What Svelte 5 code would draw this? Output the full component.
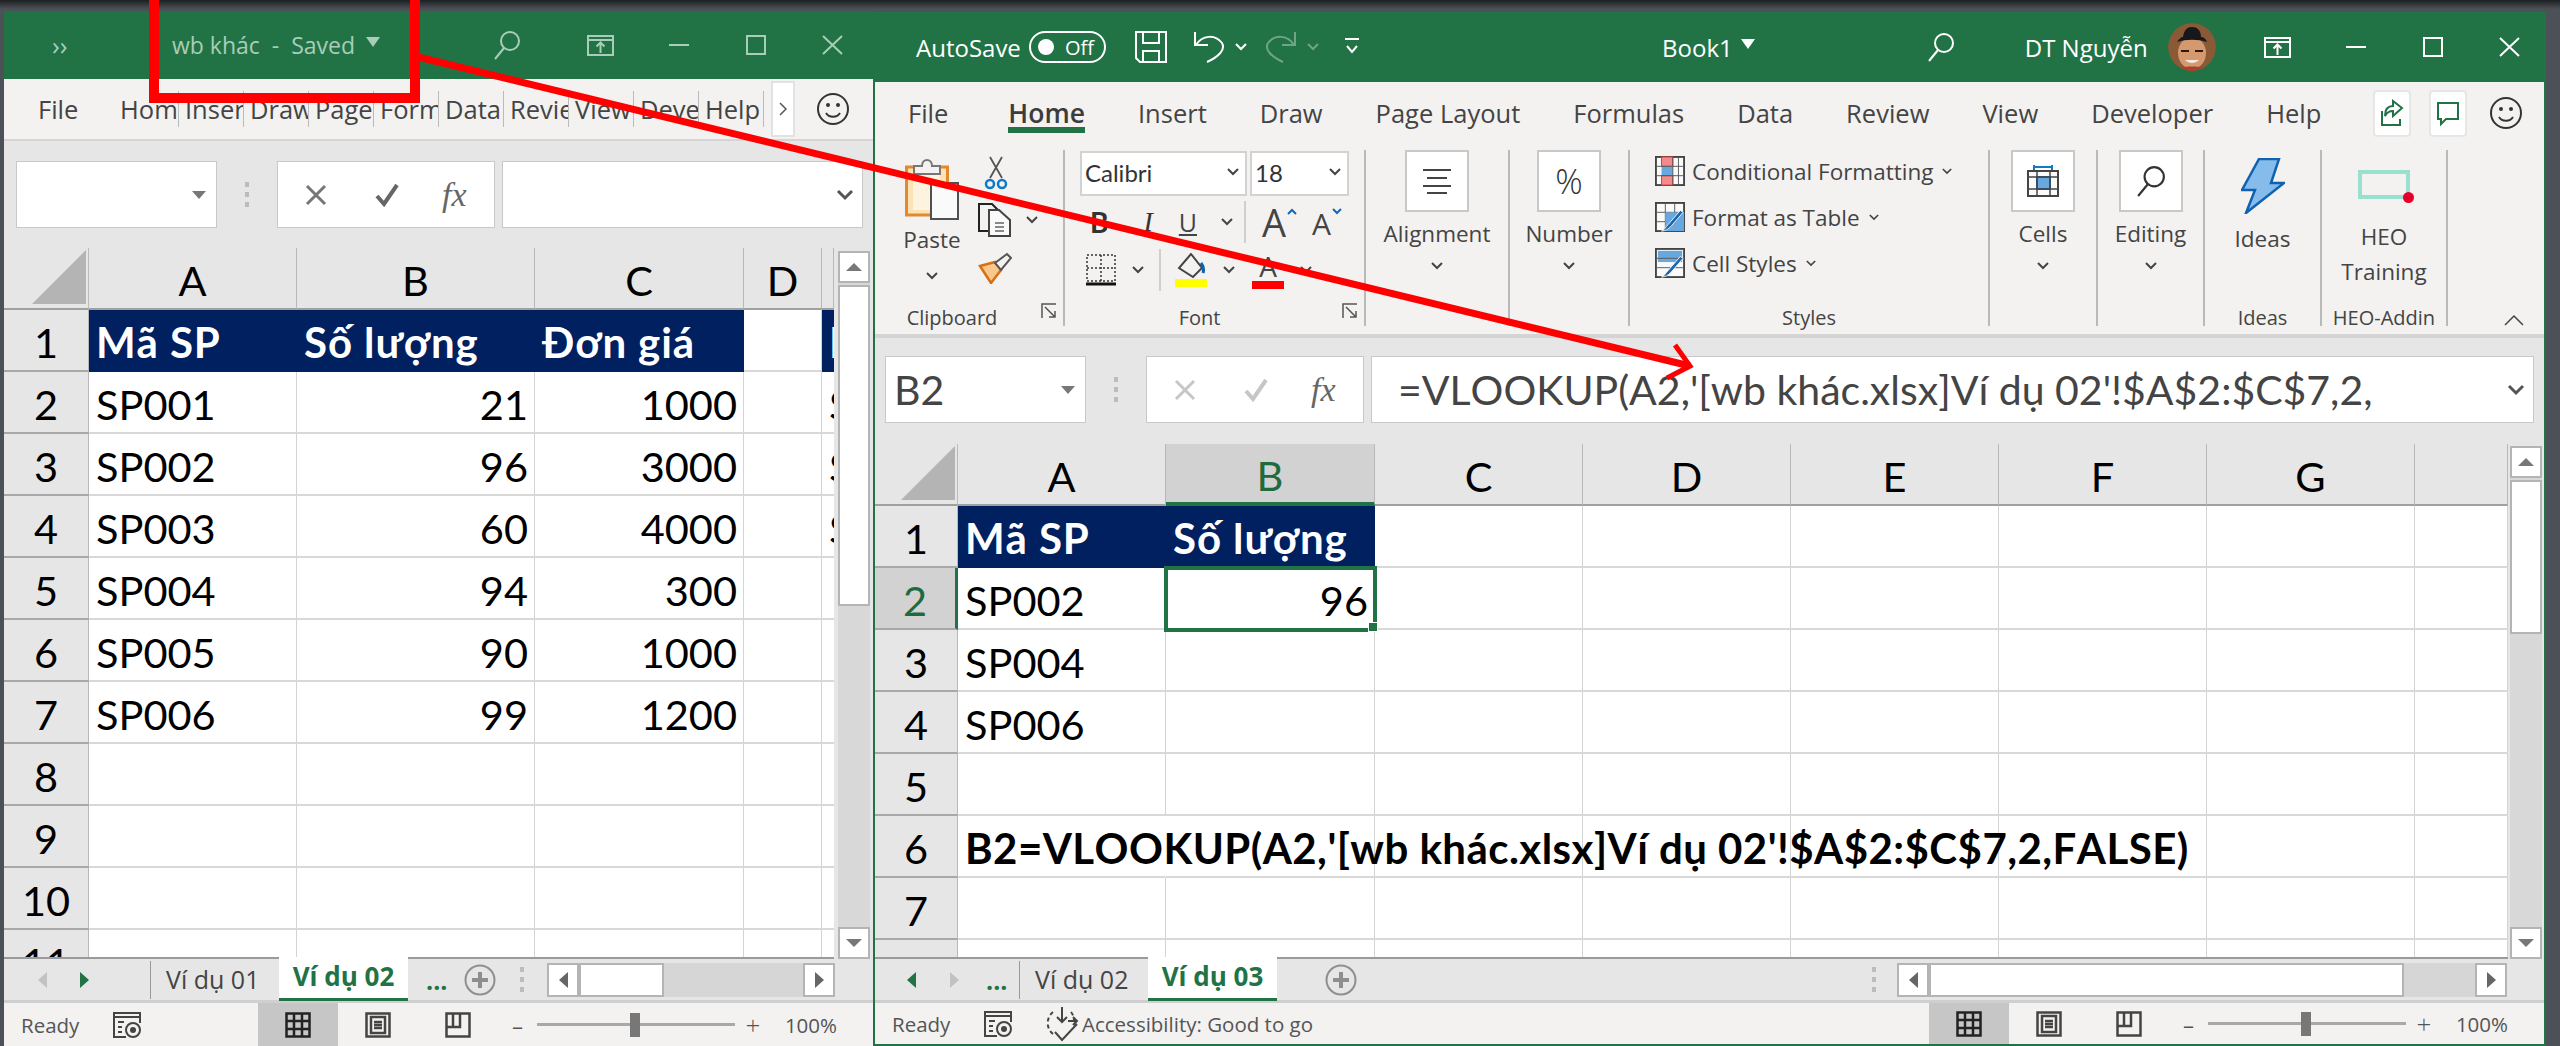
<script>
  const leftTabs = ['Home', 'Insert', 'Draw', 'Page Layout', 'Formulas', 'Data', 'Review', 'View', 'Developer', 'Help'];
  const rightTabs = ['Insert', 'Draw', 'Page Layout', 'Formulas', 'Data', 'Review', 'View', 'Developer', 'Help'];

  const leftRows = [
    ['Mã SP', 'Số lượng', 'Đơn giá', '', 'Mã SP'],
    ['SP001', '21', '1000', '', 'SP002'],
    ['SP002', '96', '3000', '', 'SP004'],
    ['SP003', '60', '4000', '', 'SP006'],
    ['SP004', '94', '300', '', ''],
    ['SP005', '90', '1000', '', ''],
    ['SP006', '99', '1200', '', ''],
    ['', '', '', '', ''],
    ['', '', '', '', ''],
    ['', '', '', '', ''],
    ['', '', '', '', '']
  ];
  const rightRows = [
    ['Mã SP', 'Số lượng'],
    ['SP002', '96'],
    ['SP004', ''],
    ['SP006', ''],
    ['', ''],
    ['B2=VLOOKUP(A2,\'[wb khác.xlsx]Ví dụ 02\'!$A$2:$C$7,2,FALSE)', ''],
    ['', ''],
    ['', '']
  ];
  const isNum = (v) => /^\d+$/.test(v);
</script>

{#snippet chev()}
  <svg class="chev" viewBox="0 0 12 8"><path d="M1 1l5 5 5-5" /></svg>
{/snippet}

{#snippet search()}
  <svg class="ic-search" viewBox="0 0 28 30"><circle cx="17" cy="11" r="9" /><path d="M11 18L2 29" /></svg>
{/snippet}

{#snippet winButtons()}
  <svg class="ic-display" viewBox="0 0 27 21"><rect x="1" y="1" width="25" height="19" /><path d="M1 5h25M13.500 18V8M9.500 11.500l4-4 4 4" /></svg>
  <span class="ic-min"></span>
  <span class="ic-max"></span>
  <svg class="ic-close" viewBox="0 0 21 20"><path d="M1 1l19 18M20 1L1 19" /></svg>
{/snippet}

{#snippet smiley()}
  <svg class="ic-smile" viewBox="0 0 32 32"><circle cx="16" cy="16" r="15" /><circle cx="11" cy="12" r="2" class="dot" /><circle cx="21" cy="12" r="2" class="dot" /><path d="M9 20c3 5 11 5 14 0" /></svg>
{/snippet}

{#snippet fxBoxes(dim)}
  <span class="dots"><i></i><i></i><i></i></span>
  <div class="fxbox" class:dim>
    <svg class="ic-x" viewBox="0 0 24 24"><path d="M3 3l18 18M21 3L3 21" /></svg>
    <svg class="ic-check" viewBox="0 0 26 24"><path d="M3 13l7 8L23 2" /></svg>
    <span class="fx">fx</span>
  </div>
{/snippet}

{#snippet sheetGrid(cols, letters, rows, rowClass, active)}
  <div class="grid {rowClass}">
    <div class="corner"><svg viewBox="0 0 56 56"><path d="M56 0v56H0z" /></svg></div>
    {#each letters as l, i}
      <div class="colhead" class:on={active && l === 'B'}>{l}</div>
    {/each}
    {#each rows as row, r}
      <div class="rowhead" class:on={active && r === 1}>{r + 1}</div>
      {#each cols as _, c}
        {@const v = row[c] ?? ''}
        <div
          class="cell"
          class:num={isNum(v)}
          class:head={r === 0 && v !== ''}
          class:long={v.length > 20}
          class:sel={active && r === 1 && c === 1}
        >{v}{#if active && r === 1 && c === 1}<span class="handle"></span>{/if}</div>
      {/each}
    {/each}
  </div>
{/snippet}

{#snippet statusIcons()}
  <div class="viewbtns">
    <span class="viewbtn on">
      <svg viewBox="0 0 26 26"><rect x="1.500" y="1.500" width="23" height="23" /><path d="M9 1v24M17 1v24M1 9h24M1 17h24" /></svg>
    </span>
    <span class="viewbtn">
      <svg viewBox="0 0 26 26"><rect x="1.500" y="1.500" width="23" height="23" /><rect x="6" y="5" width="14" height="16" /><path d="M9 10h8M9 13h8M9 16h8" /></svg>
    </span>
    <span class="viewbtn">
      <svg viewBox="0 0 26 26"><rect x="1.500" y="1.500" width="23" height="23" /><path d="M1.500 15H15V1.500M8 1.500V15" /></svg>
    </span>
  </div>
  <div class="zoom">
    <span class="zm">–</span>
    <span class="ztrack"><span class="zthumb"></span></span>
    <span class="zp">+</span>
    <span class="zpct">100%</span>
  </div>
{/snippet}

{#snippet macro()}
  <svg class="ic-macro" viewBox="0 0 28 26"><path d="M1 5V1h26v4M1 5h26M1 5v20h12M5 10h6M5 15h4M5 20h4M27 5v6" /><circle cx="20" cy="18" r="7" /><circle cx="20" cy="18" r="3" class="dot" /></svg>
{/snippet}

{#snippet launcher()}
  <svg class="ic-launch" viewBox="0 0 16 16"><path d="M1 15V1h14M4 4l10 10M14 8v6H8" /></svg>
{/snippet}

<div class="desktop">
  <!-- left window -->
  <section class="win left">
    <header class="title">
      <span class="more">››</span>
      <span class="wbname">wb khác&nbsp; -&nbsp; Saved</span>
      <span class="caret"></span>
      <span class="search-slot">{@render search()}</span>
      <span class="btns">{@render winButtons()}</span>
    </header>
    <nav class="tabs">
      <span class="tfile">File</span>
      {#each leftTabs as t}
        <span class="tcut">{t}</span>
      {/each}
      <span class="tmore"><svg viewBox="0 0 8 14"><path d="M1 1l6 6-6 6" /></svg></span>
      {@render smiley()}
    </nav>
    <div class="formula">
      <div class="namebox"><span></span><span class="tri"></span></div>
      {@render fxBoxes(false)}
      <div class="fbox"><span class="ftext"></span><svg class="fchev" viewBox="0 0 18 12"><path d="M2 2l7 7 7-7" /></svg></div>
    </div>
    <div class="sheet">
      {@render sheetGrid(['A', 'B', 'C', 'D', 'E'], ['A', 'B', 'C', 'D', ''], leftRows, 'gleft', false)}
      <div class="vscroll">
        <span class="sbtn"><i class="up"></i></span>
        <span class="vthumb"></span>
        <span class="strack"></span>
        <span class="sbtn"><i class="down"></i></span>
      </div>
    </div>
    <div class="sheetbar">
      <span class="arrows"><i class="al off"></i><i class="ar"></i></span>
      <span class="sname">Ví dụ 01</span>
      <span class="sactive">Ví dụ 02</span>
      <span class="ell">...</span>
      <span class="plus"><svg viewBox="0 0 32 32"><circle cx="16" cy="16" r="14.500" /><path d="M16 8v16M8 16h16" /></svg></span>
      <span class="dots small"><i></i><i></i><i></i></span>
      <div class="hscroll">
        <span class="hbtn"><i class="al dark"></i></span>
        <span class="hthumb"></span>
        <span class="htrack"></span>
        <span class="hbtn"><i class="ar dark"></i></span>
      </div>
    </div>
    <footer class="status">
      <span class="ready">Ready</span>
      {@render macro()}
      <span class="grow"></span>
      {@render statusIcons()}
    </footer>
  </section>

  <!-- right window -->
  <section class="win right">
    <header class="title">
      <span class="autosave">AutoSave</span>
      <span class="toggle"><i></i>Off</span>
      <svg class="ic-save" viewBox="0 0 32 32"><path d="M1 1h30v30H5l-4-4z" /><path d="M8 1v11h16V1M8 31V20h16v11" /></svg>
      <svg class="ic-undo" viewBox="0 0 32 32"><path d="M2 1v13h13M3 14C9 4 22 3 29 12c4 7-4 14-15 19" /></svg>
      <span class="qchev">{@render chev()}</span>
      <svg class="ic-redo" viewBox="0 0 32 32"><path d="M30 1v13H17M29 14C23 4 10 3 3 12c-4 7 4 14 15 19" /></svg>
      <span class="qchev dim">{@render chev()}</span>
      <svg class="ic-custom" viewBox="0 0 14 18"><path d="M0 1h14M2 8l5 6 5-6" /></svg>
      <span class="book">Book1</span>
      <span class="caret white"></span>
      <span class="search-slot r">{@render search()}</span>
      <span class="user">DT Nguyễn</span>
      <svg class="avatar" viewBox="0 0 48 48">
        <circle cx="24" cy="24" r="24" fill="#8a5a36" />
        <ellipse cx="24" cy="30" rx="14" ry="16" fill="#d4996f" />
        <path d="M9 19c2-3 4-5 6-5 1-7 4-10 9-10s9 3 9 10c3 0 5 2 6 5-9-3-21-3-30 0z" fill="#17171c" />
        <path d="M13 28h8M27 28h8" stroke="#2a1a12" stroke-width="2" />
        <path d="M17 37c4 4 10 4 14 0z" fill="#f3e9e3" />
        <path d="M8 48c2-6 30-6 32 0z" fill="#a7432e" />
      </svg>
      <span class="btns r">{@render winButtons()}</span>
    </header>
    <nav class="tabs main">
      <span class="mtab">File</span>
      <span class="mtab active">Home</span>
      {#each rightTabs as t}
        <span class="mtab">{t}</span>
      {/each}
      <span class="grow"></span>
      <span class="tbtn">
        <svg viewBox="0 0 24 28"><path d="M13 2v5C6 7 5 13 5 17c2-4 5-5 8-5v5l9-8z" /><path d="M2 12v14h18v-6" /></svg>
      </span>
      <span class="tbtn">
        <svg viewBox="0 0 24 28"><path d="M2 4h20v16H10l-5 5v-5H2z" /></svg>
      </span>
      {@render smiley()}
    </nav>
    <div class="ribbon">
      <div class="group clip">
        <div class="gbody clipbody">
          <div class="pastecol">
            <svg class="ic-paste" viewBox="0 0 54 62">
              <rect x="1.500" y="9" width="41" height="48" fill="#fbe3b6" stroke="#e2892c" stroke-width="3" />
              <rect x="8" y="16" width="27" height="36" fill="#fdf3de" />
              <path d="M9 16V8h8c0-8 10-8 10 0h8v8z" fill="#f3f2f1" stroke="#777" stroke-width="2" />
              <rect x="26" y="25" width="27" height="36" fill="#fafafa" stroke="#505050" stroke-width="2" />
            </svg>
            <span class="blabel">Paste</span>
            {@render chev()}
          </div>
          <div class="smallcol">
            <svg class="ic-sm scissors" viewBox="0 0 24 34"><path d="M6 22L18 1M18 22L6 1" stroke="#555" fill="none" stroke-width="1.800" /><circle cx="6" cy="28" r="4" fill="none" stroke="#0f7ac6" stroke-width="2.500" /><circle cx="18" cy="28" r="4" fill="none" stroke="#0f7ac6" stroke-width="2.500" /></svg>
            <span class="copyrow">
              <svg class="ic-sm copy" viewBox="0 0 34 34"><path d="M12 28H1V1h13l8 8" fill="none" stroke="#222" stroke-width="2" /><path d="M11 7h10l11 10v16H11z" fill="#fafafa" stroke="#444" stroke-width="2" /><path d="M17 20h9M17 24h9M17 28h9" stroke="#666" stroke-width="1.500" /></svg>
              {@render chev()}
            </span>
            <svg class="ic-sm brush" viewBox="0 0 34 32"><path d="M2 14l15-4 6 8-10 13z" fill="#f6c88c" stroke="#d86f10" stroke-width="2.500" /><path d="M17 11L29 2l4 4-10 12z" fill="#f3f2f1" stroke="#555" stroke-width="2" /></svg>
          </div>
        </div>
        <div class="glabel">Clipboard{@render launcher()}</div>
      </div>

      <div class="group fontg">
        <div class="gbody fontbody">
          <div class="frow one">
            <span class="combo name">Calibri {@render chev()}</span>
            <span class="combo size">18 {@render chev()}</span>
          </div>
          <div class="frow two">
            <b class="fb">B</b>
            <i class="fi">I</i>
            <span class="fu">U</span>
            {@render chev()}
            <span class="vsep"></span>
            <span class="aup">A</span>
            <svg class="acaret" viewBox="0 0 10 7"><path d="M1 6l4-4 4 4" /></svg>
            <span class="adn">A</span>
            <svg class="acaret" viewBox="0 0 10 7"><path d="M1 1l4 4 4-4" /></svg>
          </div>
          <div class="frow three">
            <svg class="ic-border" viewBox="0 0 30 32"><rect x="1" y="1" width="28" height="26" fill="none" stroke="#333" stroke-width="1.500" stroke-dasharray="2 2" /><path d="M15 1v26M1 14h28" stroke="#333" stroke-width="1.500" stroke-dasharray="2 2" /><path d="M0 30h30" stroke="#111" stroke-width="3" /></svg>
            {@render chev()}
            <span class="vsep short"></span>
            <span class="fill">
              <svg viewBox="0 0 30 26"><path d="M15 1l11 14-9 9L3 15z" fill="none" stroke="#444" stroke-width="2" /><path d="M25 10c3 4 3 7 2 10" stroke="#0a63b0" stroke-width="3" fill="none" /></svg>
              <i class="swatch y"></i>
            </span>
            {@render chev()}
            <span class="fcol">A<i class="swatch red"></i></span>
            {@render chev()}
          </div>
        </div>
        <div class="glabel">Font{@render launcher()}</div>
      </div>

      <div class="group align">
        <div class="bigbtn">
          <span class="box"><svg class="ic-align" viewBox="0 0 28 26"><path d="M0 2h28M4 10h20M0 18h28M4 25h20" /></svg></span>
          <span class="blabel">Alignment</span>
          {@render chev()}
        </div>
      </div>

      <div class="group number">
        <div class="bigbtn">
          <span class="box pct">%</span>
          <span class="blabel">Number</span>
          {@render chev()}
        </div>
      </div>

      <div class="group styles">
        <div class="gbody stylebody">
          <div class="srow">
            <svg class="ic-style" viewBox="0 0 32 32"><rect x="1" y="1" width="30" height="30" fill="#fafafa" stroke="#444" stroke-width="2" /><rect x="7" y="1" width="12" height="10" fill="#f28b8b" stroke="#d33" stroke-width="1" /><rect x="7" y="11" width="12" height="10" fill="#69a8df" /><rect x="7" y="21" width="12" height="10" fill="#f28b8b" stroke="#d33" stroke-width="1" /><path d="M19 1v30M25 1v30M1 11h30M1 21h30" stroke="#555" stroke-width="1" /></svg>
            Conditional Formatting {@render chev()}
          </div>
          <div class="srow">
            <svg class="ic-style" viewBox="0 0 32 32"><rect x="1" y="1" width="30" height="30" fill="#fafafa" stroke="#444" stroke-width="2" /><path d="M1 11h30M1 21h30M11 1v30M21 1v30" stroke="#555" stroke-width="1" /><path d="M11 11h20v20H11z" fill="#69a8df" /><path d="M7 31c3-1 4-4 7-7L27 9l3 2-13 15c-3 3-6 5-10 5z" fill="#1668b4" stroke="#f3f2f1" stroke-width="1" /></svg>
            Format as Table {@render chev()}
          </div>
          <div class="srow">
            <svg class="ic-style" viewBox="0 0 32 32"><rect x="1" y="1" width="30" height="30" fill="#fafafa" stroke="#444" stroke-width="2" /><path d="M3 3h26v12H3z" fill="#69a8df" /><path d="M1 11h30M1 21h30" stroke="#555" stroke-width="1" /><path d="M7 31c3-1 4-4 7-7L27 9l3 2-13 15c-3 3-6 5-10 5z" fill="#1668b4" stroke="#f3f2f1" stroke-width="1" /></svg>
            Cell Styles {@render chev()}
          </div>
        </div>
        <div class="glabel">Styles</div>
      </div>

      <div class="group cells">
        <div class="bigbtn">
          <span class="box"><svg class="ic-cells" viewBox="0 0 32 32"><path d="M7 2h18M7 0v5M25 0v5" stroke="#0f7ac6" stroke-width="2" fill="none" /><rect x="1" y="6" width="30" height="25" fill="#fafafa" stroke="#444" stroke-width="2" /><rect x="10" y="12" width="13" height="12" fill="#69a8df" stroke="#1668b4" stroke-width="2" /><path d="M1 12h30M1 24h30M10 6v25M23 6v25" stroke="#444" stroke-width="1.500" fill="none" /></svg></span>
          <span class="blabel">Cells</span>
          {@render chev()}
        </div>
      </div>

      <div class="group editing">
        <div class="bigbtn">
          <span class="box">{@render search()}</span>
          <span class="blabel">Editing</span>
          {@render chev()}
        </div>
      </div>

      <div class="group ideas">
        <div class="bigbtn flat">
          <svg class="ic-bolt" viewBox="0 0 44 56"><path d="M18 1h20l-8 24h13L5 55l9-23H1z" fill="#86bcec" stroke="#0f62b0" stroke-width="2.500" /></svg>
          <span class="blabel">Ideas</span>
        </div>
        <div class="glabel">Ideas</div>
      </div>

      <div class="group heo">
        <div class="bigbtn flat">
          <span class="heoic"><i></i></span>
          <span class="blabel two">HEO<br />Training</span>
        </div>
        <div class="glabel">HEO-Addin</div>
      </div>

      <div class="grow collapse"><svg viewBox="0 0 20 12"><path d="M1 11l9-9 9 9" /></svg></div>
    </div>
    <div class="formula">
      <div class="namebox"><span>B2</span><span class="tri"></span></div>
      {@render fxBoxes(true)}
      <div class="fbox"><span class="ftext">=VLOOKUP(A2,'[wb khác.xlsx]Ví dụ 02'!$A$2:$C$7,2,</span><svg class="fchev" viewBox="0 0 18 12"><path d="M2 2l7 7 7-7" /></svg></div>
    </div>
    <div class="sheet">
      {@render sheetGrid(['A', 'B', 'C', 'D', 'E', 'F', 'G', 'H'], ['A', 'B', 'C', 'D', 'E', 'F', 'G', ''], rightRows, 'gright', true)}
      <div class="vscroll">
        <span class="sbtn"><i class="up"></i></span>
        <span class="vthumb"></span>
        <span class="strack"></span>
        <span class="sbtn"><i class="down"></i></span>
      </div>
    </div>
    <div class="sheetbar">
      <span class="arrows"><i class="al"></i><i class="ar off"></i></span>
      <span class="ell lead">...</span>
      <span class="sname">Ví dụ 02</span>
      <span class="sactive">Ví dụ 03</span>
      <span class="plus"><svg viewBox="0 0 32 32"><circle cx="16" cy="16" r="14.500" /><path d="M16 8v16M8 16h16" /></svg></span>
      <span class="dots small"><i></i><i></i><i></i></span>
      <div class="hscroll">
        <span class="hbtn"><i class="al dark"></i></span>
        <span class="hthumb"></span>
        <span class="htrack"></span>
        <span class="hbtn"><i class="ar dark"></i></span>
      </div>
    </div>
    <footer class="status">
      <span class="ready">Ready</span>
      {@render macro()}
      <svg class="ic-access" viewBox="0 0 34 36"><path d="M8 6a14 14 0 0 0-2 20l3 3M26 6a14 14 0 0 1 3 9" stroke-dasharray="4 3" /><path d="M17 1v15M12 11l5 5 5-5M23 15h9M28 11l4 4-4 4M10 26l7 8 15-16" /></svg>
      <span class="access">Accessibility: Good to go</span>
      <span class="grow"></span>
      {@render statusIcons()}
    </footer>
  </section>

  <!-- red annotation drawn over the screenshot -->
  <svg class="annot" viewBox="0 0 2560 1046">
    <rect x="154" y="-6" width="261" height="104" fill="none" stroke="#ff0000" stroke-width="10" />
    <path d="M418 57L1690 366" stroke="#ff0000" stroke-width="7" fill="none" />
    <path d="M1675 345L1690 366L1667 378" stroke="#ff0000" stroke-width="5" fill="none" />
  </svg>
</div>

<style>
  :global(body) {
    margin: 0;
    background: #4b5156;
  }

  .desktop {
    position: relative;
    width: 2560px;
    height: 1046px;
    overflow: hidden;
    background: linear-gradient(#1d2022 0, #4b5156 9px);
    font-family: "Open Sans", "Noto Sans", sans-serif;
    color: #444;
  }

  .win {
    position: absolute;
    display: flex;
    flex-direction: column;
    box-sizing: border-box;
    background: #f3f2f1;
    overflow: hidden;
  }
  .win.left {
    left: 4px;
    top: 11px;
    width: 869px;
    height: 1035px;
  }
  .win.right {
    left: 873px;
    top: 12px;
    width: 1673px;
    height: 1034px;
    border-left: 2px solid #217346;
    border-right: 2px solid #217346;
    border-bottom: 2px solid #217346;
  }

  .grow { flex: 1; }

  /* title bar */
  .title {
    display: flex;
    align-items: center;
    flex: none;
    height: 68px;
    background: #217346;
    color: #fff;
    font-size: 24px;
  }
  .right .title { height: 70px; }
  .left .title { color: #a9cdb8; }
  .left .title svg { stroke: #a9cdb8; }

  .more { margin-left: 48px; width: 120px; font-size: 26px; }
  .wbname { font-size: 23px; white-space: nowrap; width: 194px; }
  .caret {
    width: 0;
    height: 0;
    border: 7px solid transparent;
    border-top: 10px solid #a9cdb8;
    border-bottom: 0;
    margin-top: -6px;
  }
  .caret.white { border-top-color: #fff; margin-left: 8px; }

  .search-slot { margin-left: 113px; display: flex; }
  .search-slot.r { margin-left: 172px; }
  .ic-search {
    width: 28px;
    height: 30px;
    fill: none;
    stroke: #fff;
    stroke-width: 2;
  }
  .btns { display: flex; align-items: center; margin-left: 66px; }
  .btns.r { margin-left: 48px; }
  .ic-display {
    width: 27px;
    height: 21px;
    fill: none;
    stroke: #fff;
    stroke-width: 2;
  }
  .ic-min { width: 20px; height: 2px; background: currentColor; margin-left: 55px; }
  .ic-max {
    box-sizing: border-box;
    width: 20px;
    height: 20px;
    border: 2px solid currentColor;
    margin-left: 57px;
  }
  .ic-close {
    width: 21px;
    height: 20px;
    margin-left: 56px;
    fill: none;
    stroke: #fff;
    stroke-width: 2;
  }

  .autosave { margin-left: 41px; width: 113px; font-size: 24px; }
  .toggle {
    display: flex;
    align-items: center;
    box-sizing: border-box;
    width: 77px;
    height: 32px;
    border: 2px solid #fff;
    border-radius: 16px;
    font-size: 20px;
    padding-left: 7px;
    gap: 11px;
  }
  .toggle i { width: 16px; height: 16px; border-radius: 50%; background: #fff; }
  .right .title svg { fill: none; stroke: #fff; stroke-width: 2; flex: none; }
  .ic-save { width: 32px; height: 32px; margin-left: 29px; }
  .ic-undo { width: 32px; height: 32px; margin-left: 26px; }
  .qchev { display: flex; margin-left: 10px; width: 14px; }
  .qchev .chev { stroke: #fff; }
  .qchev.dim { opacity: 0.35; }
  .ic-redo { width: 32px; height: 32px; margin-left: 16px; opacity: 0.35; }
  .ic-custom { width: 14px; height: 18px; margin-left: 24px; }
  .book { margin-left: 303px; font-size: 24px; }
  .user { margin-left: 70px; font-size: 24px; white-space: nowrap; }
  .right .title svg.avatar { width: 48px; height: 48px; margin-left: 20px; stroke: none; border-radius: 50%; }
  .right .title svg.avatar path[stroke] { stroke: #2a1a12; }

  /* tab rows */
  .tabs {
    display: flex;
    align-items: center;
    flex: none;
    box-sizing: border-box;
    height: 62px;
    border-bottom: 2px solid #d5d5d5;
    font-size: 25.500px;
    color: #444;
  }
  .tabs.main {
    height: 68px;
    border-bottom: 0;
    padding: 0 22px 6px 33px;
  }
  .tfile { width: 110px; padding-left: 34px; box-sizing: border-box; }
  .tcut {
    box-sizing: border-box;
    width: 65px;
    padding-left: 6px;
    border-right: 1px solid #bbb;
    overflow: hidden;
    white-space: nowrap;
    line-height: 36px;
  }
  .tmore {
    display: flex;
    align-items: center;
    justify-content: center;
    box-sizing: border-box;
    width: 24px;
    height: 56px;
    margin-left: 7px;
    background: #fff;
    border: 2px solid #e2e2e2;
  }
  .tmore svg { width: 8px; height: 14px; fill: none; stroke: #555; stroke-width: 1.500; }
  .ic-smile {
    width: 32px;
    height: 32px;
    flex: none;
    fill: none;
    stroke: #333;
    stroke-width: 2;
  }
  .left .ic-smile { margin-left: 22px; }
  .ic-smile .dot { fill: #333; stroke: none; }

  .mtab {
    position: relative;
    white-space: nowrap;
  }
  .mtab + .mtab { margin-left: 53px; }
  .mtab.active {
    margin-left: 60px;
    font-size: 26.500px;
    font-weight: 600;
    color: #3c3c3c;
  }
  .mtab.active::after {
    content: '';
    position: absolute;
    left: 0;
    right: 0;
    bottom: -2px;
    height: 6px;
    background: #217346;
  }
  .tbtn {
    display: flex;
    align-items: center;
    justify-content: center;
    box-sizing: border-box;
    width: 38px;
    height: 47px;
    margin-left: 18px;
    background: #fff;
    border: 2px solid #e6e6e6;
    border-radius: 4px;
  }
  .tbtn svg { width: 24px; height: 28px; fill: none; stroke: #217346; stroke-width: 2; }
  .main .ic-smile { margin-left: 23px; }

  /* ribbon */
  .ribbon {
    display: flex;
    flex: none;
    box-sizing: border-box;
    height: 188px;
    padding-bottom: 8px;
    border-bottom: 4px solid #d4d4d4;
    margin-top: 0;
  }
  .group {
    display: flex;
    flex-direction: column;
    flex: none;
    box-sizing: border-box;
    border-right: 2px solid #b9b9b9;
    position: relative;
    font-size: 22px;
  }
  .group.clip { width: 190px; }
  .group.fontg { width: 301px; }
  .group.align { width: 144px; }
  .group.number { width: 120px; }
  .group.styles { width: 360px; }
  .group.cells { width: 108px; }
  .group.editing { width: 107px; }
  .group.ideas { width: 117px; }
  .group.heo { width: 126px; }

  .gbody { flex: 1; min-height: 0; }
  .glabel {
    position: relative;
    flex: none;
    height: 16px;
    line-height: 16px;
    text-align: center;
    font-size: 20px;
    white-space: nowrap;
    color: #444;
  }
  .clip .glabel { padding-right: 34px; }
  .fontg .glabel { padding-right: 30px; }
  .ic-launch {
    position: absolute;
    right: 6px;
    top: -7px;
    width: 16px;
    height: 16px;
    fill: none;
    stroke: #555;
    stroke-width: 1.500;
  }
  .chev {
    width: 12px;
    height: 8px;
    flex: none;
    fill: none;
    stroke: #444;
    stroke-width: 2;
  }

  .clipbody { display: flex; padding-left: 28px; }
  .pastecol {
    display: flex;
    flex-direction: column;
    align-items: center;
    width: 58px;
    padding-top: 8px;
  }
  .ic-paste { width: 54px; height: 62px; flex: none; }
  .pastecol .blabel { margin-top: 5px; }
  .pastecol .chev { margin-top: 17px; }
  .smallcol {
    display: flex;
    flex-direction: column;
    margin-left: 17px;
    padding-top: 6px;
  }
  .ic-sm { flex: none; display: block; }
  .scissors { width: 24px; height: 34px; margin-left: 6px; }
  .copyrow { display: flex; align-items: center; gap: 14px; margin-top: 13px; }
  .copy { width: 34px; height: 34px; }
  .brush { width: 34px; height: 32px; margin-top: 15px; }

  .fontbody { padding-left: 15px; }
  .frow { display: flex; align-items: center; }
  .frow.one { height: 46px; gap: 3px; }
  .combo {
    display: flex;
    align-items: center;
    justify-content: space-between;
    box-sizing: border-box;
    height: 45px;
    padding: 0 6px 2px 3px;
    background: #fff;
    border: 2px solid #d2d2d2;
    font-family: Lato, sans-serif;
    font-size: 24px;
    color: #333;
  }
  .combo.name { width: 167px; }
  .combo.size { width: 99px; }
  .frow.two { height: 48px; margin-top: 2px; font-size: 26px; }
  .fb { margin-left: 10px; font-family: Lato, sans-serif; font-size: 28px; color: #333; }
  .fi { margin-left: 35px; font-family: "Liberation Serif", serif; font-size: 28px; color: #333; }
  .fu { margin-left: 26px; text-decoration: underline; font-size: 25px; margin-right: 24px; }
  .vsep { width: 2px; height: 42px; background: #cfcfcf; margin: 0 16px 0 11px; }
  .aup { font-size: 38px; line-height: 40px; }
  .adn { font-size: 30px; line-height: 40px; margin-left: 15px; padding-top: 4px; }
  .acaret {
    width: 10px;
    height: 7px;
    margin: -22px 0 0 1px;
    flex: none;
    fill: none;
    stroke: #1668b4;
    stroke-width: 2;
  }
  .frow.three { height: 48px; }
  .ic-border { width: 30px; height: 32px; margin-left: 6px; flex: none; }
  .frow.three > .chev { margin-left: 16px; }
  .vsep.short { margin: 0 14px 0 15px; }
  .fill { display: flex; flex-direction: column; align-items: center; width: 32px; }
  .fill svg { width: 30px; height: 26px; }
  .swatch { display: block; height: 8px; width: 32px; }
  .swatch.y { background: #ffff00; }
  .swatch.red { background: #ff0000; }
  .fcol {
    display: flex;
    flex-direction: column;
    align-items: center;
    width: 32px;
    margin-left: 17px;
    font-size: 28px;
    line-height: 30px;
  }

  .bigbtn {
    display: flex;
    flex-direction: column;
    align-items: center;
    flex: 1;
  }
  .box {
    display: flex;
    align-items: center;
    justify-content: center;
    box-sizing: border-box;
    width: 64px;
    height: 62px;
    background: #fff;
    border: 2px solid #c8c8c8;
  }
  .box svg { width: 28px; height: 26px; fill: none; stroke: #444; stroke-width: 2; }
  .box .ic-search { width: 30px; height: 34px; stroke: #333; }
  .box .ic-cells { width: 32px; height: 32px; stroke: none; }
  .box.pct { font-size: 34px; color: #333; font-weight: 300; }
  .blabel { font-size: 22.500px; line-height: 30px; color: #444; white-space: nowrap; }
  .bigbtn > .blabel { margin-top: 7px; }
  .bigbtn > .chev { margin-top: 13px; }
  .bigbtn.flat { padding-top: 8px; }
  .ic-bolt { width: 44px; height: 56px; flex: none; }
  .bigbtn.flat .blabel { margin-top: 10px; }
  .bigbtn.flat .blabel.two { margin-top: 5px; text-align: center; line-height: 35px; }
  .heoic {
    position: relative;
    box-sizing: border-box;
    width: 52px;
    height: 29px;
    margin-top: 12px;
    margin-bottom: 15px;
    border: 4px solid #99e0cf;
  }
  .heoic i {
    position: absolute;
    right: -8px;
    bottom: -8px;
    width: 11px;
    height: 11px;
    border-radius: 50%;
    background: #e4002b;
  }

  .stylebody { padding: 0 0 0 24px; margin-top: -2px; }
  .srow {
    display: flex;
    align-items: center;
    gap: 6px;
    height: 46px;
    font-size: 22.500px;
    white-space: nowrap;
  }
  .srow .chev { width: 10px; height: 7px; margin-left: 3px; }
  .ic-style { width: 32px; height: 30px; flex: none; }

  .collapse { position: relative; }
  .collapse svg {
    position: absolute;
    right: 20px;
    bottom: 0;
    width: 20px;
    height: 12px;
    fill: none;
    stroke: #444;
    stroke-width: 1.500;
  }

  /* formula row */
  .formula {
    display: flex;
    align-items: center;
    flex: none;
    box-sizing: border-box;
    height: 107px;
    padding: 0 10px 0 12px;
    background: #e6e6e6;
  }
  .right .formula { height: 106px; padding: 0 10px 3px 10px; }
  .namebox {
    display: flex;
    align-items: center;
    justify-content: space-between;
    box-sizing: border-box;
    width: 201px;
    height: 67px;
    padding: 0 10px 0 8px;
    background: #fff;
    border: 1px solid #c8c8c8;
    font-family: Lato, sans-serif;
    font-size: 41px;
    color: #444;
  }
  .tri {
    width: 0;
    height: 0;
    border: 7px solid transparent;
    border-top: 8px solid #777;
    border-bottom: 0;
  }
  .dots {
    display: flex;
    flex-direction: column;
    gap: 5px;
    align-items: center;
    width: 60px;
  }
  .dots i { width: 4px; height: 5px; background: #bcbcbc; }
  .fxbox {
    display: flex;
    align-items: center;
    flex: none;
    box-sizing: border-box;
    width: 218px;
    height: 67px;
    padding-left: 26px;
    background: #fff;
    border: 1px solid #c8c8c8;
  }
  .ic-x { width: 24px; height: 24px; fill: none; stroke: #777; stroke-width: 3; flex: none; }
  .ic-check { width: 26px; height: 24px; margin-left: 46px; fill: none; stroke: #666; stroke-width: 4; flex: none; }
  .fx {
    margin-left: 42px;
    font-family: "Liberation Serif", serif;
    font-style: italic;
    font-size: 34px;
    color: #666;
  }
  .fxbox.dim .ic-x, .fxbox.dim .ic-check { stroke: #c6c6c6; }
  .fbox {
    display: flex;
    align-items: center;
    justify-content: space-between;
    flex: 1;
    min-width: 0;
    box-sizing: border-box;
    height: 67px;
    margin-left: 7px;
    padding: 0 8px 0 26px;
    background: #fff;
    border: 1px solid #c8c8c8;
  }
  .ftext {
    font-family: Lato, sans-serif;
    font-size: 41px;
    font-kerning: none;
    color: #444;
    white-space: nowrap;
    overflow: hidden;
  }
  .fchev { width: 18px; height: 12px; flex: none; fill: none; stroke: #555; stroke-width: 3; }

  /* sheet */
  .sheet {
    display: flex;
    flex: 1;
    min-height: 0;
    background: #e6e6e6;
  }
  .grid {
    display: grid;
    grid-auto-rows: 62px;
    flex: none;
    overflow: hidden;
    font-family: Lato, "Noto Sans", sans-serif;
    font-size: 41.500px;
    font-kerning: none;
    color: #000;
    background: #fff;
    border-bottom: 2px solid #9a9a9a;
  }
  .gleft {
    grid-template-columns: 85px 208px 238px 209px 78px 12px;
    width: 830px;
  }
  .gright {
    grid-template-columns: 83px 208px 209px 208px 208px 208px 208px 208px 93px;
    width: 1633px;
  }
  .corner { background: #e6e6e6; border-right: 1px solid #bbb; border-bottom: 2px solid #a0a0a0; display: flex; align-items: flex-end; justify-content: flex-end; padding: 0 2px 4px 0; min-width: 0; }
  .corner svg { width: 54px; height: 54px; fill: #b4b4b4; }
  .colhead {
    display: flex;
    align-items: center;
    justify-content: center;
    box-sizing: border-box;
    min-width: 0;
    padding-top: 4px;
    background: #e6e6e6;
    border-right: 1px solid #b8b8b8;
    border-bottom: 2px solid #a0a0a0;
  }
  .colhead.on {
    background: #d2d2d2;
    color: #1f6b3f;
    border-bottom: 4px solid #217346;
  }
  .rowhead {
    display: flex;
    align-items: center;
    justify-content: center;
    box-sizing: border-box;
    padding-top: 4px;
    background: #e6e6e6;
    border-right: 1px solid #b8b8b8;
    border-bottom: 2px solid #a8a8a8;
  }
  .rowhead.on {
    background: #d2d2d2;
    color: #1f6b3f;
    border-right: 3px solid #217346;
  }
  .cell {
    position: relative;
    display: flex;
    align-items: center;
    box-sizing: border-box;
    min-width: 0;
    padding: 4px 6px 0 7px;
    background: #fff;
    border-right: 1px solid #d4d4d4;
    border-bottom: 2px solid #d8d8d8;
    white-space: nowrap;
    overflow: hidden;
  }
  .cell.num { justify-content: flex-end; }
  .cell.head {
    background: #002060;
    color: #fff;
    font-size: 42px;
    letter-spacing: 0.900px;
    font-weight: 700;
    border-color: #002060;
  }
  .cell.long {
    font-size: 42px;
    letter-spacing: 0.450px;
    font-weight: 700;
    overflow: visible;
    z-index: 1;
    border-right-color: transparent;
  }
  .cell.sel {
    overflow: visible;
    z-index: 2;
    outline: 4px solid #217346;
    outline-offset: -2px;
  }
  .handle {
    position: absolute;
    right: -4px;
    bottom: -4px;
    width: 8px;
    height: 8px;
    background: #217346;
    border: 1px solid #fff;
  }

  .vscroll {
    display: flex;
    flex-direction: column;
    box-sizing: border-box;
    width: 32px;
    margin: 3px 0 0 4px;
    background: #d8d8d8;
  }
  .right .vscroll { margin: 2px 0 0 2px; }
  .sbtn {
    display: flex;
    align-items: center;
    justify-content: center;
    box-sizing: border-box;
    flex: none;
    height: 32px;
    background: #fff;
    border: 2px solid #b4b4b4;
  }
  .sbtn .up { width: 0; height: 0; border: 8px solid transparent; border-bottom: 8px solid #777; border-top: 0; }
  .sbtn .down { width: 0; height: 0; border: 8px solid transparent; border-top: 8px solid #777; border-bottom: 0; }
  .vthumb {
    box-sizing: border-box;
    flex: none;
    height: 321px;
    margin-top: 2px;
    background: #fff;
    border: 2px solid #b4b4b4;
  }
  .right .vthumb { height: 154px; }
  .strack { flex: 1; }

  /* sheet tabs */
  .sheetbar {
    display: flex;
    align-items: center;
    flex: none;
    box-sizing: border-box;
    height: 44px;
    background: #e6e6e6;
    border-bottom: 3px solid #cfcfcf;
    font-size: 25px;
    color: #444;
  }
  .arrows {
    display: flex;
    align-items: center;
    flex: none;
    box-sizing: border-box;
    width: 146px;
    height: 100%;
    padding-left: 34px;
    gap: 33px;
  }
  .right .arrows { width: 84px; padding-left: 32px; gap: 34px; }
  .al, .ar { display: block; width: 0; height: 0; border: 8px solid transparent; }
  .al { border-right: 9px solid #217346; border-left: 0; }
  .ar { border-left: 9px solid #217346; border-right: 0; }
  .al.off { border-right-color: #c2c2c2; }
  .ar.off { border-left-color: #c2c2c2; }
  .al.dark { border-right-color: #666; }
  .ar.dark { border-left-color: #666; }
  .sname {
    box-sizing: border-box;
    flex: none;
    width: 129px;
    height: 38px;
    line-height: 36px;
    padding-left: 15px;
    border-left: 1px solid #999;
    white-space: nowrap;
  }
  .sactive {
    box-sizing: border-box;
    flex: none;
    width: 129px;
    height: 44px;
    margin-top: -2px;
    line-height: 38px;
    text-align: center;
    font-size: 26px;
    font-weight: 700;
    color: #217346;
    background: #fff;
    border-bottom: 3px solid #217346;
    white-space: nowrap;
  }
  .ell { flex: none; margin-left: 18px; font-weight: 700; color: #217346; width: 38px; line-height: 30px; }
  .ell.lead { margin-left: 27px; width: 33px; }
  .plus { display: flex; flex: none; }
  .right .plus { margin-left: 48px; }
  .plus svg { width: 32px; height: 32px; fill: none; stroke: #8e8e8e; stroke-width: 2; }
  .plus svg path { stroke-width: 4; }
  .dots.small { flex: none; width: 51px; }
  .right .dots.small { width: 46px; margin-left: 494px; }
  .hscroll {
    display: flex;
    flex: none;
    box-sizing: border-box;
    width: 288px;
    height: 34px;
    background: #d6d6d6;
  }
  .right .hscroll { width: 610px; }
  .hbtn {
    display: flex;
    align-items: center;
    justify-content: center;
    box-sizing: border-box;
    flex: none;
    width: 32px;
    background: #fff;
    border: 2px solid #b4b4b4;
  }
  .hthumb {
    box-sizing: border-box;
    flex: none;
    width: 85px;
    background: #fff;
    border: 2px solid #b4b4b4;
  }
  .right .hthumb { width: 475px; }
  .htrack { flex: 1; }

  /* status bar */
  .status {
    display: flex;
    align-items: stretch;
    flex: none;
    height: 43px;
    background: #f3f2f1;
    font-size: 20.500px;
    color: #555;
  }
  .right .status { height: 41px; }
  .ready { align-self: center; margin-left: 17px; width: 92px; }
  .ic-macro {
    align-self: center;
    width: 28px;
    height: 26px;
    flex: none;
    fill: none;
    stroke: #444;
    stroke-width: 2;
  }
  .ic-macro .dot { fill: #444; stroke: none; }
  .ic-access {
    align-self: center;
    width: 34px;
    height: 36px;
    margin-left: 33px;
    flex: none;
    fill: none;
    stroke: #444;
    stroke-width: 2;
  }
  .access { align-self: center; margin-left: 3px; white-space: nowrap; font-size: 20.500px; }
  .viewbtns { display: flex; }
  .viewbtn {
    display: flex;
    align-items: center;
    justify-content: center;
    width: 80px;
  }
  .viewbtn.on { background: #c6c6c6; }
  .viewbtn svg { width: 26px; height: 26px; fill: none; stroke: #444; stroke-width: 2.500; }
  .viewbtn.on svg { stroke: #222; }
  .zoom {
    display: flex;
    align-items: center;
    margin-left: 14px;
    margin-right: 36px;
  }
  .zm { width: 25px; font-size: 22px; }
  .ztrack {
    position: relative;
    display: block;
    width: 198px;
    height: 3px;
    background: #a8a8a8;
  }
  .zthumb {
    position: absolute;
    left: 93px;
    top: -10px;
    width: 10px;
    height: 24px;
    background: #777;
  }
  .zp { width: 36px; text-align: center; font-size: 26px; font-weight: 300; }
  .zpct { width: 66px; text-align: right; }

  /* annotation */
  .annot {
    position: absolute;
    inset: 0;
    width: 2560px;
    height: 1046px;
    pointer-events: none;
    z-index: 5;
  }
</style>
